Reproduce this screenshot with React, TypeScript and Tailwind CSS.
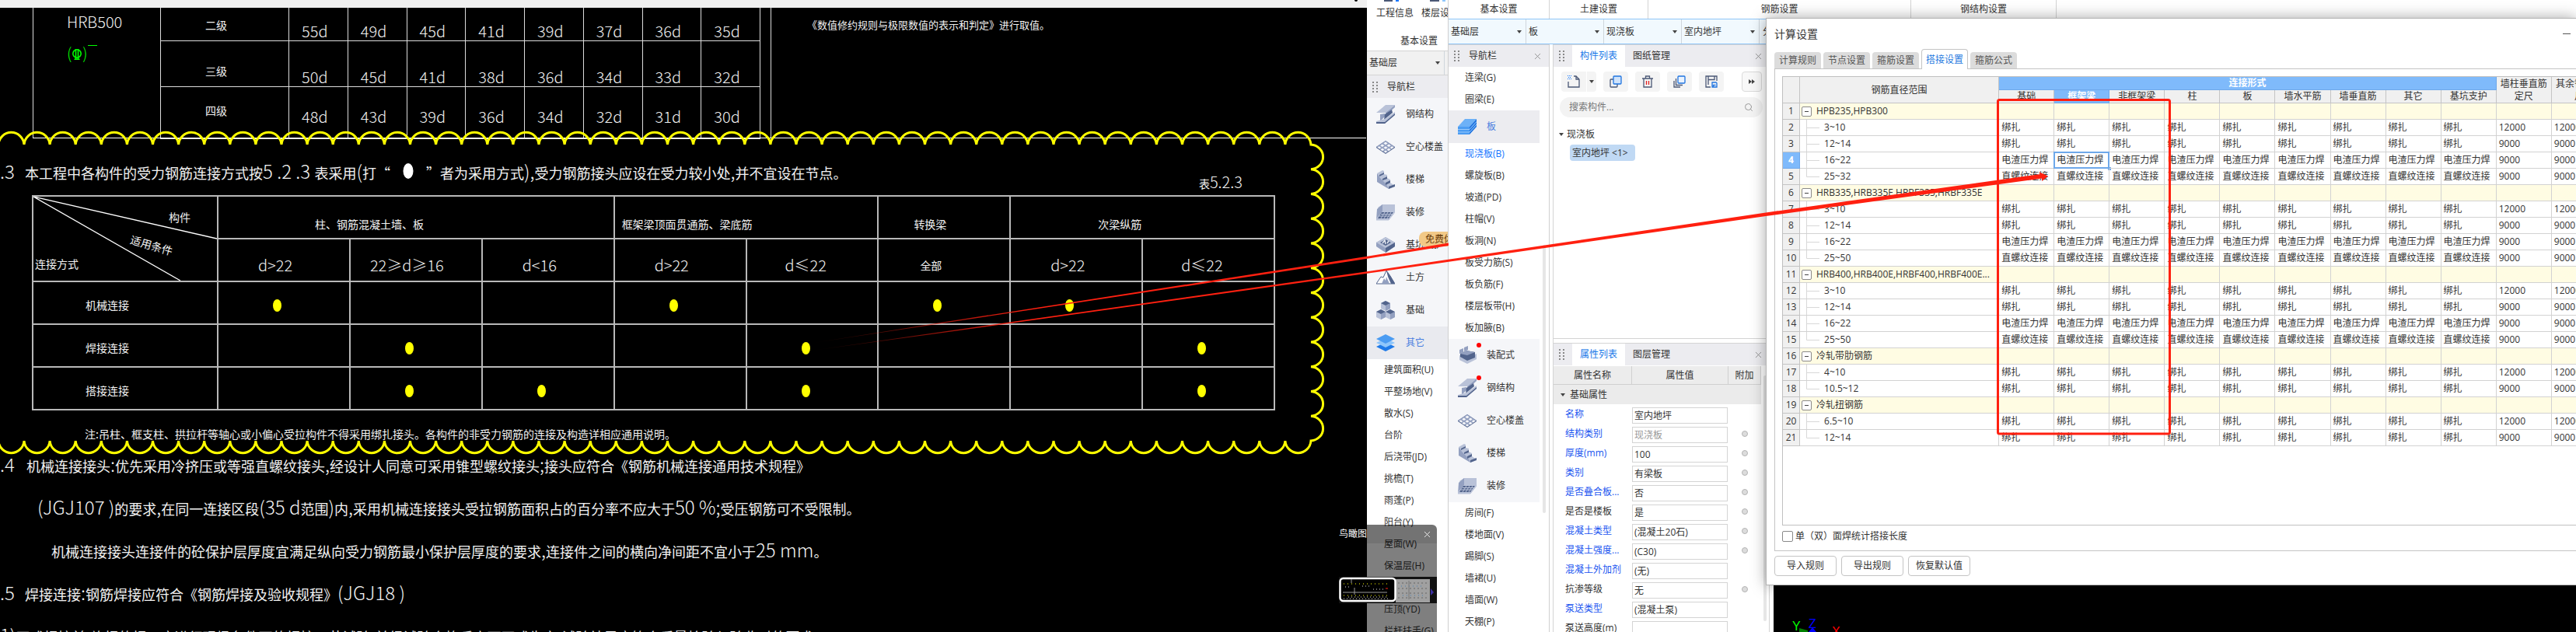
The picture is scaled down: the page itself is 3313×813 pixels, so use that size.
import React from "react";
import { X, Search } from "lucide-react";

const UI = "font-['Open_Sans','Noto_Sans_CJK_SC',sans-serif]";
const CAD = "font-['Noto_Sans_CJK_SC',sans-serif]";

/* ---------- drawing on the left ---------- */

function CadText({ children, small = false }: { children: string; small?: boolean }) {
  return (
    <>
      {children.split(/([A-Za-z0-9.%(),;: ]+)/).map((part, i) =>
        i % 2 ? (
          <span key={i} className={`whitespace-pre font-light leading-none ${small ? "text-[20px]" : "text-[24px]"}`}>
            {part}
          </span>
        ) : (
          part
        ),
      )}
    </>
  );
}

const anchorage = [
  { grade: "二级", values: ["55d", "49d", "45d", "41d", "39d", "37d", "36d", "35d"], row: "h-[42px]", label: "pt-3", value: "pt-5" },
  { grade: "三级", values: ["50d", "45d", "41d", "38d", "36d", "34d", "33d", "32d"], row: "h-[59px]", label: "pt-7", value: "pt-9" },
  { grade: "四级", values: ["48d", "43d", "39d", "36d", "34d", "32d", "31d", "30d"], row: "h-[67px]", label: "pt-5", value: "pt-7" },
];

function AnchorageTable() {
  return (
    <table className="ml-[42px] w-[936px] table-fixed border-collapse leading-5">
      <colgroup>
        <col className="w-[164px]" />
        <col className="w-[165px]" />
      </colgroup>
      <tbody>
        {anchorage.map((r, i) => (
          <tr key={r.grade} className={r.row}>
            {i === 0 && (
              <th rowSpan={3} className="border-x border-[#dcdcdc] pl-[43px] pt-2 text-left align-top text-[20px] font-light">
                HRB500
                <div className="mt-5 flex text-[#00ff00]">
                  <span>(</span>
                  <svg className="mt-1 h-4 w-[14px]" viewBox="0 0 14 16" fill="none" stroke="#00ff00" strokeWidth="1.6">
                    <circle cx="7" cy="7" r="5.2" />
                    <path d="M5.5 1v13M8.5 1v13M3.5 14.2h7" />
                  </svg>
                  <span>)</span>
                  <span className="h-px w-3 bg-[#00ff00]" />
                </div>
              </th>
            )}
            <th className={`border border-t-0 border-[#dcdcdc] pl-[57px] text-left align-top text-sm font-normal leading-5 ${r.label}`}>{r.grade}</th>
            {r.values.map((v, j) => (
              <td key={j} className={`border border-t-0 border-[#dcdcdc] pl-4 align-top text-[20px] font-light ${r.value}`}>
                {v}
              </td>
            ))}
          </tr>
        ))}
      </tbody>
    </table>
  );
}

const cell = "border-2 border-[#b8b8b8] p-0";
const conditions = [
  ["d>22", "pl-[51px]"],
  ["22≥d≥16", "pl-[25px]"],
  ["d<16", "pl-[51px]"],
  ["d>22", "pl-[51px]"],
  ["d≤22", "pl-[49px]"],
  ["全部", "pl-[53px]"],
  ["d>22", "pl-[51px]"],
  ["d≤22", "pl-[49px]"],
];
const methods: [string, number[]][] = [
  ["机械连接", [0, 3, 5, 6]],
  ["焊接连接", [1, 4, 7]],
  ["搭接连接", [1, 2, 4, 7]],
];

function ConnectionTable() {
  return (
    <table className="ml-[41px] mt-[1px] w-[1599px] table-fixed border-collapse text-sm leading-5">
      <colgroup>
        <col className="w-[238px]" />
      </colgroup>
      <thead>
        <tr className="h-[55px]">
          <th rowSpan={2} className={`${cell} relative align-top font-normal`}>
            <svg className="absolute inset-0 h-full w-full" viewBox="0 0 236 108" preserveAspectRatio="none" stroke="#fff" strokeWidth="1.3">
              <path d="M0 0L236 54M0 0L189 108" />
            </svg>
            <div className="mt-4 pr-[34px] text-right">构件</div>
            <div className="ml-[124px] mt-4 w-14 rotate-[16deg]">适用条件</div>
            <div className="mt-1 pl-[2px] text-left">连接方式</div>
          </th>
          <th colSpan={3} className={`${cell} pl-[124px] pt-4 text-left font-normal`}>柱、钢筋混凝土墙、板</th>
          <th colSpan={2} className={`${cell} pl-[9px] pt-4 text-left font-normal`}>框架梁顶面贯通筋、梁底筋</th>
          <th className={`${cell} pl-[45px] pt-4 text-left font-normal`}>转换梁</th>
          <th colSpan={2} className={`${cell} pl-[112px] pt-4 text-left font-normal`}>次梁纵筋</th>
        </tr>
        <tr className="h-[55px]">
          {conditions.map(([c, pad], i) => (
            <th key={i} className={`${cell} ${pad} pt-3 text-left ${c === "全部" ? "text-sm font-normal" : "text-[20px] font-light"}`}>
              {c}
            </th>
          ))}
        </tr>
      </thead>
      <tbody>
        {methods.map(([name, marks]) => (
          <tr key={name} className="h-[55px]">
            <th className={`${cell} pl-[67px] pt-1 text-left font-normal`}>{name}</th>
            {conditions.map((_, i) => (
              <td key={i} className={`${cell} pl-[70px] pt-[6px]`}>
                {marks.includes(i) && <span className="block h-4 w-[11px] rounded-[50%] bg-[#ffff00]" />}
              </td>
            ))}
          </tr>
        ))}
      </tbody>
    </table>
  );
}

function RevisionCloud() {
  const right = 1686;
  const top = 186;
  const bottom = 567;
  const step = 33.1;
  const count = 52;
  let d = `M${right - step * count} ${top}`;
  for (let i = count - 1; i >= 0; i--) d += `A16.6 17 0 0 1 ${right - step * i} ${top}`;
  for (let i = 1; i <= 12; i++) d += `A16.5 15.9 0 0 1 ${right} ${top + ((bottom - top) / 12) * i}`;
  for (let i = 1; i <= count; i++) d += `A16.6 17 0 0 1 ${right - step * i} ${bottom}`;
  return (
    <svg className="pointer-events-none absolute inset-0 h-[813px] w-full" viewBox="0 0 1758 813" preserveAspectRatio="none" fill="none" stroke="#ffff00" strokeWidth="3" strokeLinejoin="miter">
      <path d={d} />
    </svg>
  );
}

function Drawing() {
  return (
    <section className={`relative min-w-0 overflow-hidden whitespace-nowrap bg-black text-[#f2f2f2] ${CAD}`}>
      <div className="flex h-[10px] justify-end bg-[#f0f0f0] pr-3">
        <span className="h-[2px] w-1 rounded-b bg-black" />
      </div>
      <div className="relative flex h-[168px]">
        <AnchorageTable />
        <div className="ml-[13px] border-l border-[#dcdcdc] pl-[46px] pt-3 text-[13px] leading-5">《数值修约规则与极限数值的表示和判定》进行取值。</div>
        <div className="absolute bottom-0 left-[42px] right-px h-px bg-white" />
      </div>
      <div className="mt-[30px] flex h-[42px] justify-between pr-[160px]">
        <p className="flex h-7 text-lg leading-7">
          <span className="w-8"><CadText>.3</CadText></span>
          <span><CadText>本工程中各构件的受力钢筋连接方式按5 .2 .3 表采用(打“</CadText></span>
          <svg className="mx-4 h-6 w-[14px]" viewBox="0 0 14 24"><ellipse cx="7" cy="12" rx="6.5" ry="10" fill="#fff" /></svg>
          <span><CadText>”者为采用方式),受力钢筋接头应设在受力较小处,并不宜设在节点。</CadText></span>
        </p>
        <p className="self-end text-sm leading-7"><CadText small>表5.2.3</CadText></p>
      </div>
      <ConnectionTable />
      <p className="ml-[109px] mt-4 text-sm leading-7">注:吊柱、框支柱、拱拉杆等轴心或小偏心受拉构件不得采用绑扎接头。各构件的非受力钢筋的连接及构造详相应通用说明。</p>
      <div className="mt-[13px] grid auto-rows-[28px] gap-[27px] text-lg leading-7">
        <p className="flex">
          <span className="w-[34px]"><CadText>.4</CadText></span>
          <span><CadText>机械连接接头:优先采用冷挤压或等强直螺纹接头,经设计人同意可采用锥型螺纹接头;接头应符合《钢筋机械连接通用技术规程》</CadText></span>
        </p>
        <p className="pl-12"><CadText>(JGJ107 )的要求,在同一连接区段(35 d范围)内,采用机械连接接头受拉钢筋面积占的百分率不应大于50 %;受压钢筋可不受限制。</CadText></p>
        <p className="pl-[66px]"><CadText>机械连接接头连接件的砼保护层厚度宜满足纵向受力钢筋最小保护层厚度的要求,连接件之间的横向净间距不宜小于25 mm。</CadText></p>
        <p className="flex">
          <span className="w-8"><CadText>.5</CadText></span>
          <span><CadText>焊接连接:钢筋焊接应符合《钢筋焊接及验收规程》(JGJ18 )</CadText></span>
        </p>
        <p><CadText>1)正式焊接前,施焊的焊工应进行现场条件下的焊接工艺试验,并经试验合格后方可正式生产;试验结果应符合质量检验与验收时的要求。</CadText></p>
      </div>
      <RevisionCloud />
    </section>
  );
}

/* ---------- icons ---------- */

const L = "#b9c2d8";
const M = "#93a0c0";
const D = "#52648c";

function NavIcon({ name }: { name: string }) {
  const art: Record<string, React.ReactNode> = {
    steel: (
      <>
        <path d="M0 10L12 0h12L12 10z" fill={L} />
        <path d="M12 10L24 0v3L13 13z" fill={M} />
        <path d="M5 12l6-1v4l-6 6z" fill={M} />
        <path d="M11 12l9-6 1 4-11 9z" fill={D} />
        <path d="M0 21l11-3L24 9v3L11 24H0z" fill={L} />
        <path d="M0 22h11L24 11v2L11 24H0z" fill={D} />
      </>
    ),
    waffle: (
      <>
        <path d="M0 12L12 4l12 8v1l-12 8-12-8z" fill={D} />
        <path d="M0 12L12 4l12 8-12 8z" fill={M} />
        <g fill="#f5f6f9">
          <path d="M12 5.6l2.6 1.8L12 9.200 9.400 7.400zM7.800 8.400l2.600 1.800L7.800 12 5.200 10.200zM16.200 8.400l2.600 1.800-2.600 1.800-2.600-1.800zM12 11.200l2.600 1.800L12 14.800 9.400 13zM3.800 11.200L6.200 13l-2 1.400L1.600 12.600zM20.200 11.200l2.200 1.400-2.600 1.800L17.800 13zM7.800 13.800l2.600 1.800-2.400 1.600L5.400 15.400zM16.200 13.800l2.400 1.600-2.600 1.800-2.400-1.600zM12 16.600l2.200 1.400-2.200 1.400L9.800 18z" />
        </g>
      </>
    ),
    stairs: (
      <>
        <path d="M1 4v11l15 9V19z" fill={M} />
        <path d="M1 4l7-4 2 1v4l4 1v4l4 2v4l6 4-8 4-3-6-4-4-4-4z" fill={L} />
        <path d="M4 6l6-3v2L4 8zM8 11l6-3v3l-6 2zM12 16l6-3v3l-6 3zM16 21l8-3v3l-8 3z" fill={D} />
      </>
    ),
    finish: (
      <>
        <path d="M2 6l6-4h16v10H6z" fill={L} />
        <path d="M1 8l7-6v9l-8 11z" fill={M} />
        <path d="M0 22V20l8-9h16l-8 11z" fill={L} />
        <path d="M7 12h15l-6 8H2z" fill={D} />
        <path d="M6 14.500h16M4 17h15M11 12L6 20M15 12l-5 8M19 12l-5 8M0 22h16l8-10" stroke={L} fill="none" />
      </>
    ),
    pit: (
      <>
        <path d="M0 9l12-7 12 7v5l-12 8L0 14z" fill={M} />
        <path d="M0 9l12-7 12 7-12 7z" fill={L} />
        <path d="M5 9l7-4 7 4-7 4z" fill={D} />
        <path d="M12 16l12-7v5l-12 8z" fill={D} />
        <path d="M8 10l3-4 1 5M14 10l2-3" stroke="#e4e8f0" strokeWidth="1.500" />
      </>
    ),
    earth: (
      <>
        <path d="M0 20l6-9 3 1 4-9 5 7 6 10z" fill="#fff" stroke={D} />
        <path d="M13 3l2 8 4 9h5l-6-10z" fill={D} />
        <path d="M7 20l3-7 2 3 1-5 4 9z" fill={M} />
      </>
    ),
    base: (
      <>
        <path d="M6 3l6-3 6 3v7l-6 3-6-3zM0 14l6-3 6 3v7l-6 3-6-3zM12 14l6-3 6 3v7l-6 3-6-3z" fill={L} />
        <path d="M12 6l6-3v7l-6 3zM6 17l6-3v7l-6 3zM18 17l6-3v7l-6 3z" fill={M} />
        <path d="M6 3l6-3 6 3-6 3zM0 14l6-3 6 3-6 3zM12 14l6-3 6 3-6 3z" fill={D} />
      </>
    ),
    layers: (
      <>
        <path d="M0 17l12-6 12 6-12 6z" fill="#1f7ae8" />
        <path d="M0 12l12-6 12 6-12 6z" fill="#8fc6fb" />
        <path d="M0 7l12-6 12 6-12 6z" fill="#4b9cf2" />
      </>
    ),
    slab: (
      <>
        <path d="M0 12L9 2h15L15 12z" fill="#6db1f7" />
        <path d="M0 12h15v10H0z" fill="#4b9cf2" />
        <path d="M15 12l9-10v10l-9 10z" fill="#1f74e0" />
        <path d="M0 15.500h15l9-10M0 19h15l9-10" stroke="#9ccbfb" fill="none" />
      </>
    ),
    prefab: (
      <>
        <path d="M2 5l5-2v5l-5 2zM8 2l5-2v5l-5 2z" fill={M} />
        <path d="M2 12l10 4 12-6v7l-12 6-10-5z" fill={L} />
        <path d="M3 10l8-4 11 2v7l-10 4-9-5z" fill={D} />
        <path d="M3 10l8-4 11 2-10 4z" fill={M} />
      </>
    ),
  };
  return (
    <svg className="h-6 w-6 shrink-0" viewBox="0 0 24 24" fill="none" aria-hidden="true">
      {art[name]}
    </svg>
  );
}

function Grip() {
  return (
    <svg className="h-[14px] w-[7px] shrink-0" viewBox="0 0 7 14" fill="#888" aria-hidden="true">
      {[0, 4, 8, 12].map((y) => (
        <path key={y} d={`M0 ${y}h2v2h-2zM5 ${y}h2v2h-2z`} />
      ))}
    </svg>
  );
}

function Caret({ className = "" }: { className?: string }) {
  return (
    <svg className={`h-1 w-[6px] shrink-0 ${className}`} viewBox="0 0 6 4" fill="#444" aria-hidden="true">
      <path d="M0 0h6L3 4z" />
    </svg>
  );
}

function Combo({ label, value }: { label: string; value: string }) {
  return (
    <label className="relative flex w-[100px] shrink-0 items-center border-r border-[#cfd6dc]">
      <select aria-label={label} className="h-full w-full appearance-none bg-transparent pl-[3px] outline-none" defaultValue={value}>
        <option>{value}</option>
      </select>
      <Caret className="pointer-events-none absolute right-[5px]" />
    </label>
  );
}

/* ---------- first application window ---------- */

const categories = [
  ["steel", "钢结构"],
  ["waffle", "空心楼盖"],
  ["stairs", "楼梯"],
  ["finish", "装修"],
  ["pit", "基坑支护"],
  ["earth", "土方"],
  ["base", "基础"],
  ["layers", "其它"],
];
const others = ["建筑面积(U)", "平整场地(V)", "散水(S)", "台阶", "后浇带(JD)", "挑檐(T)", "雨蓬(P)", "阳台(Y)", "屋面(W)", "保温层(H)", "", "压顶(YD)", "栏杆扶手(G)"];

function BackWindow() {
  return (
    <section className={`min-w-0 overflow-hidden whitespace-nowrap border-r border-[#cfcfcf] bg-white text-xs text-[#333] ${UI}`}>
      <div className="flex h-[65px] flex-col">
        <div className="flex h-[2px] gap-1 pl-[22px]">
          <span className="w-[11px] bg-[#4b5876]" />
          <span className="w-1 bg-[#1677ff]" />
          <span className="ml-9 w-3 bg-[#4b5876]" />
          <span className="w-1 bg-[#8fc6fb]" />
        </div>
        <div className="mt-[5px] flex gap-[10px] pl-3 leading-5">
          <span>工程信息</span>
          <span>楼层设置</span>
        </div>
        <div className="mt-4 pl-[43px] leading-5">基本设置</div>
      </div>
      <div className="flex h-8 border-y border-[#d4d4d4] bg-[#f1f1f1]">
        <Combo label="楼层" value="基础层" />
        <span className="pl-1 leading-[30px]">基础</span>
      </div>
      <div className="flex h-[29px] items-center gap-3 bg-[#ececf0] pl-[7px]">
        <Grip />
        导航栏
      </div>
      <div className="bg-[#f5f6f9]">
        {categories.map(([icon, name]) => (
          <button key={name} type="button" className={`relative flex h-[42px] w-full items-center gap-[14px] pl-3 ${name === "其它" ? "bg-[#e9eaef] text-[#4a7fe0]" : ""}`}>
            <NavIcon name={icon} />
            {name}
            {icon === "pit" && <span className="absolute left-[67px] top-[4px] h-[19px] rounded-l-lg rounded-br-lg bg-[#f2c987] px-2 leading-[19px] text-[#6b3f0c]">免费体验</span>}
          </button>
        ))}
      </div>
      <ul>
        {others.map((o, i) => (
          <li key={i} className="h-7 pl-[22px] leading-7">{o}</li>
        ))}
      </ul>
    </section>
  );
}

/* ---------- second application window ---------- */

function PanelHeader({ tabs }: { tabs: string[] }) {
  return (
    <div className="flex h-[29px] shrink-0 items-center border-t border-[#d4d4d4] bg-[#ececf0] pl-[7px]">
      <Grip />
      <button type="button" className="ml-[10px] h-full w-[68px] bg-white text-[#1677e8]">{tabs[0]}</button>
      <button type="button" className="ml-[10px]">{tabs[1]}</button>
      <button type="button" aria-label="关闭" className="ml-auto mr-[7px] text-[#888]">
        <X size={13} strokeWidth={1.5} />
      </button>
    </div>
  );
}

function SubItem({ name }: { name: string }) {
  return (
    <button type="button" className={`block h-7 w-full pl-[21px] text-left ${name === "现浇板(B)" ? "text-[#1677ff]" : ""}`}>
      {name}
    </button>
  );
}

const slabItems = ["现浇板(B)", "螺旋板(B)", "坡道(PD)", "柱帽(V)", "板洞(N)", "板受力筋(S)", "板负筋(F)", "楼层板带(H)", "板加腋(B)"];
const lowerCategories = [
  ["prefab", "装配式"],
  ["steel", "钢结构"],
  ["waffle", "空心楼盖"],
  ["stairs", "楼梯"],
  ["finish", "装修"],
];
const finishItems = ["房间(F)", "楼地面(V)", "踢脚(S)", "墙裙(U)", "墙面(W)", "天棚(P)"];

function Navigator() {
  return (
    <nav className="relative w-[130px] shrink-0 overflow-hidden border-r border-[#cfcfcf]">
      <div className="flex h-[29px] items-center gap-3 border-t border-[#d4d4d4] bg-[#ececf0] pl-[7px]">
        <Grip />
        导航栏
        <button type="button" aria-label="关闭" className="ml-auto mr-2 text-[#888]">
          <X size={13} strokeWidth={1.5} />
        </button>
      </div>
      <div className="pr-3">
        <SubItem name="连梁(G)" />
        <SubItem name="圈梁(E)" />
        <button type="button" className="flex h-[42px] w-full items-center gap-[13px] bg-[#ececf0] pl-3 text-[#4a7fe0]">
          <NavIcon name="slab" />
          板
        </button>
        {slabItems.map((n) => (
          <SubItem key={n} name={n} />
        ))}
        {lowerCategories.map(([icon, name], i) => (
          <button key={name} type="button" className="relative flex h-[42px] w-full items-center gap-[13px] bg-[#f5f6f9] pl-3">
            <NavIcon name={icon} />
            {name}
            {i < 2 && <span className="absolute left-9 top-[5px] h-[6px] w-[6px] rounded-full bg-[#ff0000]" />}
          </button>
        ))}
        {finishItems.map((n) => (
          <SubItem key={n} name={n} />
        ))}
      </div>
      <span className="absolute right-1 top-[258px] h-[345px] w-1 rounded bg-[#e6e6e6]" />
    </nav>
  );
}

const tool = "flex h-[26px] w-8 items-center justify-center rounded bg-[#f4f4f4]";

function ComponentTools() {
  return (
    <div className="flex h-[26px] gap-[9px] pl-[10px]">
      <div className="flex">
        <button type="button" aria-label="新建" className={`${tool} rounded-r-none`}>
          <svg className="h-[18px] w-[18px]" viewBox="0 0 18 18" fill="none" stroke="#4b5876" strokeWidth="1.300">
            <path d="M2 9v7h14V6l-4-4H9M12 2v4h4" />
            <path d="M1 1h1v1H1zM3 1h1v1H3zM5 1h1v1H5zM2 3h1v1H2zM4 3h1v1H4zM1 5h1v1H1zM3 5h1v1H3zM5 5h1v1H5z" fill="#1677ff" stroke="none" />
          </svg>
        </button>
        <button type="button" aria-label="新建选项" className="ml-px flex h-[26px] w-3 items-center justify-center rounded-r bg-[#f4f4f4]">
          <Caret />
        </button>
      </div>
      <button type="button" aria-label="复制" className={tool}>
        <svg className="h-[18px] w-[18px]" viewBox="0 0 18 18" fill="none" strokeWidth="1.300">
          <rect x="2" y="6" width="9" height="10" rx="1" stroke="#4b5876" />
          <rect x="6" y="2" width="10" height="10" rx="1" stroke="#1f74e0" fill="#cfe3fb" />
        </svg>
      </button>
      <button type="button" aria-label="删除" className={tool}>
        <svg className="h-[18px] w-[18px]" viewBox="0 0 18 18" fill="none" stroke="#4b5876" strokeWidth="1.300">
          <path d="M2 5h14M4 5v11h10V5M6.500 5V2h5v3" />
          <path d="M7.500 8v5M10.500 8v5" stroke="#e02020" />
        </svg>
      </button>
      <button type="button" aria-label="层间复制" className={tool}>
        <svg className="h-[18px] w-[18px]" viewBox="0 0 18 18" fill="none" strokeWidth="1.300">
          <path d="M2 8v8h8M4.500 5v8.500H13" stroke="#4b5876" />
          <rect x="7" y="2" width="9" height="9" rx="1" stroke="#1f74e0" fill="#eaf3fe" />
        </svg>
      </button>
      <button type="button" aria-label="存档" className={tool}>
        <svg className="h-[18px] w-[18px]" viewBox="0 0 18 18" fill="none" stroke="#4b5876" strokeWidth="1.300">
          <path d="M8 16H2V2h14v6M5 2v11M5 6.500h8V2" />
          <path d="M10 10h5l1 1v5h-6zM11.500 16v-2.500h3" stroke="#1f74e0" />
        </svg>
      </button>
      <button type="button" aria-label="更多" className="ml-[14px] flex h-[26px] w-[26px] items-center justify-center rounded border border-[#dadada] bg-[#f8f8f8]">
        <svg className="h-[6px] w-2" viewBox="0 0 8 6" fill="#444"><path d="M0 0l4 3-4 3zM4 0l4 3-4 3z" /></svg>
      </button>
    </div>
  );
}

const properties: [string, string, boolean, boolean][] = [
  ["名称", "室内地坪", true, false],
  ["结构类别", "现浇板", true, true],
  ["厚度(mm)", "100", true, true],
  ["类别", "有梁板", true, true],
  ["是否叠合板...", "否", true, true],
  ["是否是楼板", "是", false, true],
  ["混凝土类型", "(混凝土20石)", true, true],
  ["混凝土强度...", "(C30)", true, true],
  ["混凝土外加剂", "(无)", true, false],
  ["抗渗等级", "无", false, true],
  ["泵送类型", "(混凝土泵)", true, false],
  ["泵送高度(m)", "", false, false],
];

function Panels() {
  return (
    <div className="relative ml-1 flex w-[279px] shrink-0 flex-col overflow-hidden border-x border-[#d4d4d4]">
      <PanelHeader tabs={["构件列表", "图纸管理"]} />
      <div className="flex h-[350px] shrink-0 flex-col border-b border-[#d4d4d4] pt-[6px]">
        <ComponentTools />
        <label className="ml-2 mt-[7px] flex h-[26px] w-[261px] items-center rounded-full bg-[#f3f3f3] px-3">
          <input aria-label="搜索构件" placeholder="搜索构件..." className="w-full bg-transparent outline-none placeholder:text-[#777]" />
          <Search size={12} className="shrink-0 text-[#999]" />
        </label>
        <div className="mt-3 flex items-center gap-1 pl-[7px] leading-5">
          <Caret />
          现浇板
        </div>
        <div className="ml-[21px] mt-[3px] h-[21px] w-[84px] rounded-sm bg-[#c0d9f4] pl-[3px] leading-[21px]">室内地坪 &lt;1&gt;</div>
      </div>
      <div className="mt-[5px]">
        <PanelHeader tabs={["属性列表", "图层管理"]} />
      </div>
      <table className="mt-[1px] w-[267px] table-fixed border-separate border-spacing-0">
        <colgroup>
          <col className="w-[101px]" />
          <col className="w-[124px]" />
          <col />
        </colgroup>
        <thead>
          <tr className="h-6 bg-[#ececec]">
            {["属性名称", "属性值", "附加"].map((h) => (
              <th key={h} className="border-b border-r border-[#d0d0d0] p-0 font-normal leading-5">{h}</th>
            ))}
          </tr>
        </thead>
        <tbody>
          <tr className="h-[25px] bg-[#ebebeb]">
            <th colSpan={3} className="p-0 text-left font-normal leading-5">
              <span className="flex items-center gap-[6px] pl-[9px]">
                <Caret />
                基础属性
              </span>
            </th>
          </tr>
          {properties.map(([name, value, linked, mark]) => (
            <tr key={name} className="h-[25px]">
              <th className={`p-0 pl-[15px] text-left font-normal leading-5 ${linked ? "text-[#1a55f0]" : ""}`}>{name}</th>
              <td className="p-0">
                <input aria-label={name} defaultValue={value} className={`mt-[3px] block h-[21px] w-[123px] border border-[#d4d4d4] pl-[2px] outline-none ${value === "现浇板" ? "text-[#999]" : ""}`} />
              </td>
              <td className="p-0">{mark && <span className="mx-auto block h-2 w-2 rounded-full border border-[#b5b5b5] bg-[#dcdcdc]" />}</td>
            </tr>
          ))}
        </tbody>
      </table>
      <span className="absolute right-[3px] top-[426px] h-[316px] w-1 rounded bg-[#e6e6e6]" />
    </div>
  );
}

function FrontWindow() {
  return (
    <section className={`relative flex min-w-0 flex-col overflow-hidden whitespace-nowrap bg-white text-xs text-[#333] ${UI}`}>
      <div className="flex h-6 shrink-0 text-center leading-6">
        <span className="w-[130px] border-r border-[#d4d4d4]">基本设置</span>
        <span className="w-[127px] border-r border-[#d4d4d4]">土建设置</span>
        <span className="w-[338px] border-r border-[#d4d4d4]">钢筋设置</span>
        <span className="w-[187px] border-r border-[#d4d4d4]">钢结构设置</span>
      </div>
      <div className="flex h-[33px] shrink-0 border-y border-[#8fc5f8] bg-[#f1f9fe]">
        <Combo label="楼层" value="基础层" />
        <Combo label="构件大类" value="板" />
        <Combo label="构件类型" value="现浇板" />
        <Combo label="构件" value="室内地坪" />
        <span className="pl-1 leading-[31px]">分层1</span>
      </div>
      <div className="flex min-h-0 flex-1">
        <Navigator />
        <Panels />
        <div className="ml-[5px] flex flex-1 items-end overflow-hidden bg-black">
          <svg className="ml-4 h-5 w-20" viewBox="0 0 80 20" fontFamily="Liberation Sans" fontSize="16">
            <text x="8" y="18" fill="#00ff00">Y</text>
            <text x="29" y="15" fill="#0000ff">Z</text>
            <text x="59" y="25" fill="#ff0000">X</text>
            <path d="M17 15l11 3v2H17z" fill="#008000" />
            <path d="M34 14l5 6h-10z" fill="#0000ff" />
          </svg>
        </div>
      </div>
      <SettingsDialog />
    </section>
  );
}

/* ---------- settings dialog ---------- */

const W = "电渣压力焊";
const B = "绑扎";
const S = "直螺纹连接";
type Row = { label: string; group?: boolean; last?: boolean; kind?: string; length?: string };
const group = (label: string): Row => ({ label, group: true });
const rows: Row[] = [
  group("HPB235,HPB300"),
  { label: "3~10", kind: B, length: "12000" },
  { label: "12~14", kind: B, length: "9000" },
  { label: "16~22", kind: W, length: "9000" },
  { label: "25~32", kind: S, length: "9000", last: true },
  group("HRB335,HRB335E,HRBF335,HRBF335E"),
  { label: "3~10", kind: B, length: "12000" },
  { label: "12~14", kind: B, length: "9000" },
  { label: "16~22", kind: W, length: "9000" },
  { label: "25~50", kind: S, length: "9000", last: true },
  group("HRB400,HRB400E,HRBF400,HRBF400E..."),
  { label: "3~10", kind: B, length: "12000" },
  { label: "12~14", kind: B, length: "9000" },
  { label: "16~22", kind: W, length: "9000" },
  { label: "25~50", kind: S, length: "9000", last: true },
  group("冷轧带肋钢筋"),
  { label: "4~10", kind: B, length: "12000" },
  { label: "10.5~12", kind: B, length: "9000", last: true },
  group("冷轧扭钢筋"),
  { label: "6.5~10", kind: B, length: "12000" },
  { label: "12~14", kind: B, length: "9000", last: true },
];
const parts = ["基础", "框架梁", "非框架梁", "柱", "板", "墙水平筋", "墙垂直筋", "其它", "基坑支护"];

const head = "border-b border-r border-[#c4c4c4] bg-[#f0f0f0] p-0 font-normal";
const blueHead = "border-b border-r border-[#6ea8ea] bg-[#7fbafb] p-0 font-bold text-white";
const body = "border-b border-r border-[#d2d2d2] p-0";

function SettingsTable() {
  return (
    <table className="w-[1060px] table-fixed border-separate border-spacing-0 leading-4">
      <colgroup>
        <col className="w-[22px]" />
        <col className="w-[256px]" />
        {[...parts, "a", "b"].map((p) => (
          <col key={p} className="w-[71px]" />
        ))}
      </colgroup>
      <thead>
        <tr className="h-[17px]">
          <th rowSpan={2} className={head} />
          <th rowSpan={2} className={head}>钢筋直径范围</th>
          <th colSpan={9} className={blueHead}>连接形式</th>
          <th rowSpan={2} className={`${head} leading-4`}>墙柱垂直筋<br />定尺</th>
          <th rowSpan={2} className={`${head} leading-4`}>其余钢筋定<br />尺</th>
        </tr>
        <tr className="h-[17px]">
          {parts.map((p) => (
            <th key={p} className={p === "框架梁" ? blueHead : head}>{p}</th>
          ))}
        </tr>
      </thead>
      <tbody>
        {rows.map((r, i) => (
          <tr key={i} className={`h-[21px] ${r.group ? "bg-[#fffce3]" : "bg-white"}`}>
            <th className={i === 3 ? blueHead : head}>{i + 1}</th>
            <td className={body}>
              {r.group ? (
                <span className="flex items-center gap-[6px] pl-[2px]">
                  <button type="button" aria-label="折叠" className="flex h-[13px] w-[13px] items-center justify-center rounded-[2px] border border-[#8a8a8a] bg-white">
                    <span className="h-px w-[5px] bg-[#444]" />
                  </button>
                  {r.label}
                </span>
              ) : (
                <span className="flex h-5 items-center gap-[6px] pl-2">
                  <svg className="h-5 w-[17px]" viewBox="0 0 17 20" fill="none" stroke="#d8d8d8">
                    <path d={r.last ? "M.5 0V10.500H17" : "M.5 0V20M.5 10.500H17"} />
                  </svg>
                  {r.label}
                </span>
              )}
            </td>
            {parts.map((p) => (
              <td key={p} className={`${body} relative pl-[3px]`}>
                {r.kind}
                {i === 3 && p === "框架梁" && (
                  <span className="absolute -inset-px border-2 border-[#6ea8ea]">
                    <span className="absolute -bottom-1 -right-1 h-1 w-1 bg-[#6ea8ea]" />
                  </span>
                )}
              </td>
            ))}
            <td className={`${body} pl-[3px]`}>{r.length}</td>
            <td className={`${body} pl-[3px]`}>{r.length}</td>
          </tr>
        ))}
      </tbody>
    </table>
  );
}

const dialogTabs = ["计算规则", "节点设置", "箍筋设置", "搭接设置", "箍筋公式"];

function SettingsDialog() {
  return (
    <div role="dialog" aria-label="计算设置" className="absolute left-[408px] right-0 top-[23px] flex h-[730px] flex-col overflow-hidden border-y border-l border-[#b4b4b4] bg-white pl-[10px] shadow-[0_0_18px_rgba(0,0,0,0.35)]">
      <div className="flex h-[39px] shrink-0 items-center justify-between pr-[7px]">
        <h1 className="text-sm">计算设置</h1>
        <button type="button" aria-label="最小化" className="h-4 w-[10px]">
          <span className="block h-px bg-[#555]" />
        </button>
      </div>
      <div role="tablist" className="flex h-[25px] shrink-0 items-end gap-[3px]">
        {dialogTabs.map((t) =>
          t === "搭接设置" ? (
            <button key={t} type="button" role="tab" aria-selected="true" className="relative z-10 -mb-px h-[26px] w-[60px] rounded-t border border-b-0 border-[#c4c4c4] bg-white text-[#1f7ae0]">
              {t}
            </button>
          ) : (
            <button key={t} type="button" role="tab" aria-selected="false" className="h-[21px] w-[60px] rounded-t bg-[#dcdcdc] text-[#555]">
              {t}
            </button>
          ),
        )}
      </div>
      <div className="flex h-[621px] shrink-0 flex-col border-y border-l border-[#c4c4c4] pl-[9px] pt-[9px]">
        <div className="h-[578px] overflow-hidden border-y border-l border-[#c0c0c0]">
          <SettingsTable />
        </div>
        <label className="mt-1 flex items-center gap-[3px] leading-5">
          <input type="checkbox" className="h-[14px] w-[14px] appearance-none rounded-[2px] border border-[#8a8a8a] bg-white" />
          单（双）面焊统计搭接长度
        </label>
      </div>
      <div className="mt-[6px] flex gap-[6px]">
        {["导入规则", "导出规则", "恢复默认值"].map((b) => (
          <button key={b} type="button" className="h-[26px] w-20 rounded border border-[#c4c4c4] bg-white">
            {b}
          </button>
        ))}
      </div>
    </div>
  );
}

/* ---------- overlays ---------- */

function BirdView() {
  return (
    <div className={`absolute left-[1722px] top-[675px] w-[126px] overflow-hidden rounded-tr-md text-xs text-white ${UI}`}>
      <div className="flex h-6 items-center justify-between bg-black/55 pr-[6px]">
        鸟瞰图
        <button type="button" aria-label="关闭鸟瞰图"><X size={13} strokeWidth={1.5} /></button>
      </div>
      <div className="h-[114px] bg-black/50 pt-[43px]">
        <svg className="block h-[34px] w-[126px]" viewBox="0 0 126 34" fill="none">
          <path d="M0 0h126v34H0z" fill="#111" />
          <path d="M73 3h44v30H73z" fill="#a0a0a0" />
          <path d="M76 8h38M76 15h38M76 21h38M76 27h38" stroke="#666" strokeDasharray="2 3" />
          <path d="M80 12h30M82 24h26" stroke="#4a7fb0" strokeDasharray="1 4" />
          <path d="M90 5v24" stroke="#777" />
          <path d="M118 15l4 5-4 4z" fill="#3a2ea0" />
          <rect x="1.500" y="2" width="71" height="29" rx="4" fill="#000" stroke="#fff" strokeWidth="2.500" />
          <path d="M6 9h60M6 24h60" stroke="#ffff00" strokeDasharray="1 4" />
          <path d="M5 20h57M20 14v9M16 3v5" stroke="#999" />
          <path d="M8 13h8M30 12h12M44 16h16M6 28h58M12 26h50" stroke="#ddd" strokeDasharray="1 3" />
          <path d="M60 15h3" stroke="#ff2010" />
        </svg>
      </div>
    </div>
  );
}

function Annotations() {
  return (
    <svg className="pointer-events-none absolute inset-0 h-[813px] w-full" viewBox="0 0 3313 813" preserveAspectRatio="none">
      <defs>
        <linearGradient id="fade" gradientUnits="userSpaceOnUse" x1="1040" y1="0" x2="1330" y2="0">
          <stop offset="0" stopColor="#ff2010" stopOpacity="0" />
          <stop offset="1" stopColor="#ff2010" />
        </linearGradient>
      </defs>
      <path d="M1040 442L1200 416.500 1760 329.500 1863 312.500v3.600L1760 332.500 1200 417.700z" fill="url(#fade)" />
      <path d="M1040 451.500L1200 428.500 1760 349 2271 273.500 2624 224 2622 221 2634 226.500 2626 233 2626 229.500 2271 278 1760 351.600 1200 429.700z" fill="url(#fade)" />
      <rect x="2569.500" y="128.500" width="221" height="429.500" rx="2" fill="none" stroke="#ff2010" strokeWidth="3" />
    </svg>
  );
}

export default function App() {
  return (
    <main className="relative grid h-screen min-h-[813px] grid-cols-[1758fr_105fr_1450fr] overflow-hidden bg-white">
      <Drawing />
      <BackWindow />
      <FrontWindow />
      <BirdView />
      <Annotations />
    </main>
  );
}
